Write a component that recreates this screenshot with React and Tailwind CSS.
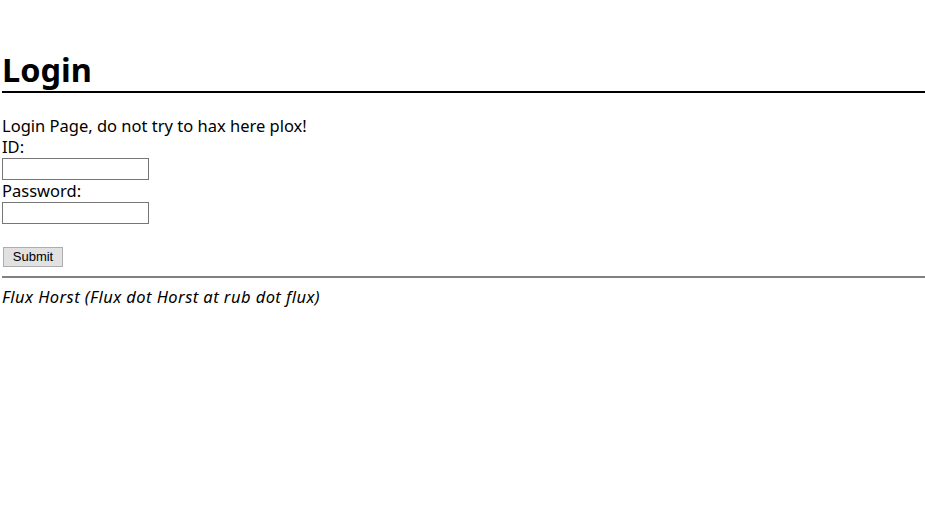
import React from 'react'

export default function App() {
  return (
    <div className="min-h-[506px] bg-white text-black pl-[2px] font-['Noto_Sans','Open_Sans',sans-serif] text-[16.5px] leading-[22px]">
      <h1 className="pt-[48px] text-[32.5px] leading-[43px] font-bold border-b-2 border-black">Login</h1>

      <form className="mt-[22px]" onSubmit={e => e.preventDefault()}>
        <div className="leading-[21px]">Login Page, do not try to hax here plox!</div>
        <div>ID:</div>
        <input
          type="text"
          className="block w-[147px] h-[22px] border border-[#767676] bg-white"
        />
        <div>Password:</div>
        <input
          type="password"
          className="block w-[147px] h-[22px] border border-[#767676] bg-white"
        />
        <div className="h-[20px]" />
        <button
          type="submit"
          className="mt-[1px] ml-[1px] w-[60px] h-[20px] border border-[#adadad] bg-[#e1e1e1] text-[13px] leading-[18px] font-['Liberation_Sans',Arial,sans-serif]"
        >
          Submit
        </button>
      </form>

      <hr className="mt-[9px] border-0 border-t-2 border-[#808080]" />
      <div className="mt-[8px] italic tracking-[0.45px]">Flux Horst (Flux dot Horst at rub dot flux)</div>
    </div>
  )
}
